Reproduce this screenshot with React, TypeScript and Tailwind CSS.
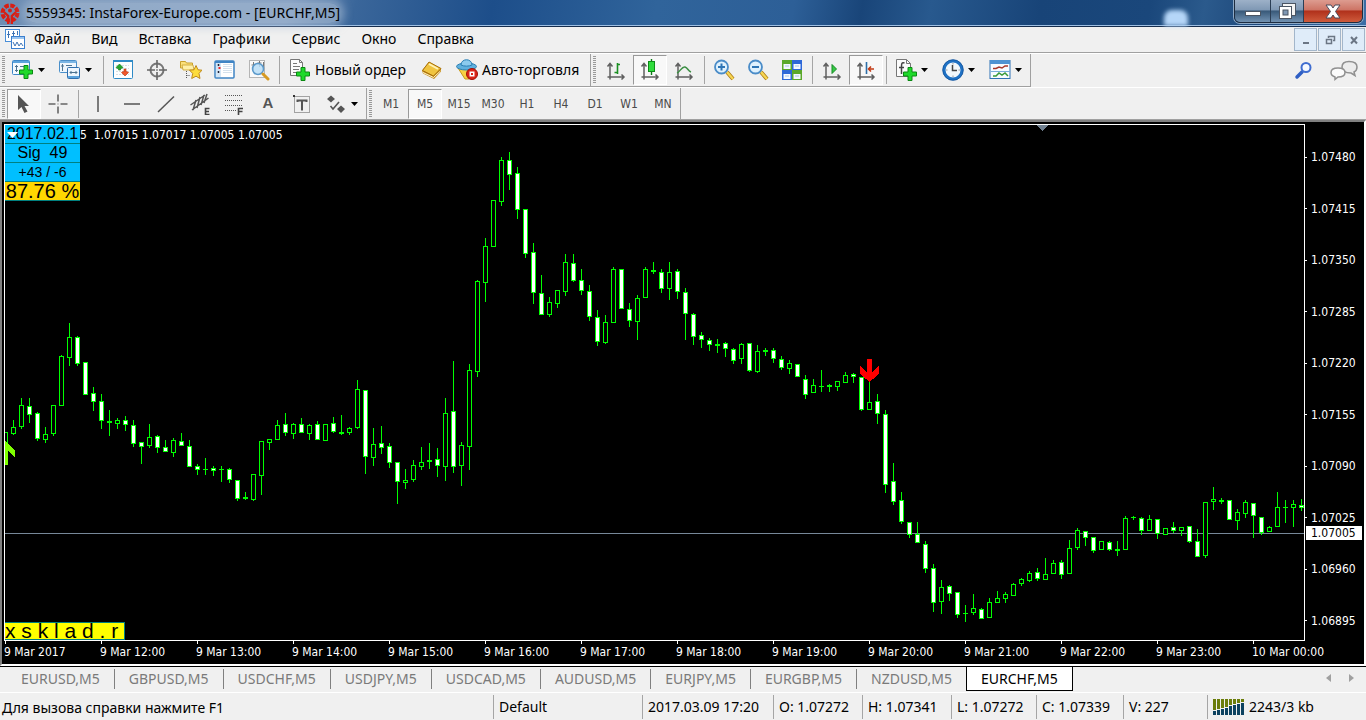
import type { ReactNode } from 'react'
import clsx from 'clsx'

type Candle = [high: number, top: number, bottom: number, low: number, kind: number]

// kind: 1 = up (hollow), 0 = down (white), 2 = doji (solid)
const candles: Candle[] = [
  [432, 432, 445, 445, 1], [420, 427, 434, 435, 1], [398, 405, 427, 429, 1], [398, 406, 415, 423, 0],
  [412, 413, 439, 441, 0], [427, 434, 440, 443, 1], [405, 405, 434, 436, 1], [355, 356, 406, 406, 1],
  [323, 337, 358, 366, 1], [336, 337, 364, 366, 0], [362, 362, 395, 395, 0], [387, 393, 402, 411, 0],
  [394, 401, 421, 429, 0], [410, 421, 423, 436, 2], [418, 420, 424, 429, 1], [416, 420, 425, 431, 0],
  [420, 425, 444, 447, 0], [442, 442, 447, 464, 0], [424, 437, 446, 448, 1], [435, 436, 448, 453, 0],
  [440, 447, 452, 452, 0], [438, 440, 453, 457, 1], [433, 441, 446, 446, 0], [440, 446, 467, 467, 0],
  [464, 466, 470, 475, 0], [458, 469, 470, 475, 2], [466, 468, 471, 476, 0], [466, 469, 470, 482, 2],
  [468, 469, 480, 483, 0], [480, 480, 499, 501, 0], [492, 497, 499, 500, 2], [474, 474, 500, 501, 1],
  [441, 441, 476, 495, 1], [439, 439, 443, 450, 1], [420, 425, 440, 440, 1], [413, 424, 433, 436, 0],
  [423, 424, 434, 439, 1], [418, 424, 433, 433, 0], [424, 425, 434, 440, 1], [421, 424, 440, 440, 0],
  [424, 424, 441, 441, 1], [417, 423, 432, 433, 0], [415, 432, 434, 435, 2], [427, 428, 433, 435, 1],
  [380, 389, 428, 429, 1], [390, 390, 457, 474, 0], [428, 444, 458, 466, 1], [426, 443, 448, 454, 0],
  [443, 446, 463, 468, 0], [462, 462, 482, 504, 0], [469, 480, 483, 489, 1], [460, 465, 480, 482, 1],
  [447, 462, 467, 470, 1], [443, 460, 462, 469, 2], [448, 459, 466, 477, 0], [398, 413, 467, 481, 1],
  [361, 411, 467, 473, 0], [442, 445, 466, 486, 1], [364, 370, 447, 470, 1], [280, 281, 372, 377, 1],
  [238, 246, 283, 302, 1], [200, 200, 247, 247, 1], [157, 160, 202, 206, 1], [152, 160, 175, 190, 0],
  [167, 173, 210, 219, 0], [209, 209, 254, 258, 0], [243, 252, 293, 304, 0], [275, 293, 315, 315, 0],
  [297, 302, 315, 317, 1], [290, 290, 304, 308, 1], [254, 262, 292, 296, 1], [254, 263, 281, 282, 0],
  [269, 280, 291, 295, 0], [285, 291, 317, 321, 0], [310, 317, 342, 346, 0], [315, 322, 343, 344, 1],
  [267, 269, 323, 323, 1], [269, 269, 309, 309, 0], [303, 309, 321, 327, 0], [295, 298, 322, 340, 1],
  [267, 269, 298, 298, 1], [262, 270, 272, 274, 2], [269, 272, 289, 293, 0], [262, 272, 289, 300, 1],
  [269, 271, 292, 299, 0], [288, 292, 314, 340, 0], [313, 314, 337, 345, 0], [332, 335, 340, 348, 0],
  [338, 340, 345, 351, 0], [339, 344, 346, 353, 2], [342, 343, 349, 357, 0], [348, 349, 361, 364, 0],
  [343, 344, 359, 364, 1], [343, 343, 371, 372, 0], [345, 351, 372, 373, 1], [348, 350, 352, 356, 2],
  [348, 350, 359, 363, 0], [356, 359, 368, 370, 0], [360, 363, 369, 374, 1], [364, 364, 377, 377, 0],
  [375, 379, 395, 399, 0], [379, 385, 393, 393, 1], [370, 386, 387, 392, 2], [384, 385, 387, 392, 2],
  [381, 381, 387, 391, 1], [372, 375, 383, 383, 1], [373, 374, 377, 383, 0], [377, 377, 410, 411, 0],
  [380, 402, 410, 410, 1], [394, 401, 414, 424, 0], [410, 414, 485, 493, 0], [463, 481, 502, 505, 0],
  [492, 500, 522, 524, 0], [522, 522, 535, 538, 0], [522, 534, 543, 543, 0], [541, 544, 569, 573, 0],
  [564, 568, 603, 612, 0], [580, 587, 602, 614, 1], [585, 586, 594, 601, 0], [592, 592, 615, 618, 0],
  [605, 613, 614, 622, 2], [594, 608, 613, 615, 1], [608, 609, 619, 619, 0], [598, 602, 618, 618, 1],
  [591, 598, 603, 603, 1], [592, 594, 599, 603, 1], [583, 584, 596, 596, 1], [578, 579, 584, 586, 1],
  [571, 573, 581, 582, 1], [568, 572, 579, 581, 0], [558, 574, 580, 580, 1], [560, 563, 574, 574, 1],
  [560, 562, 575, 579, 0], [540, 548, 574, 574, 1], [528, 530, 548, 550, 1], [531, 531, 538, 546, 0],
  [537, 537, 551, 553, 0], [541, 541, 550, 550, 1], [541, 542, 550, 551, 0], [541, 549, 551, 556, 2],
  [516, 518, 550, 550, 1], [516, 517, 518, 520, 2], [517, 518, 531, 535, 0], [515, 519, 531, 531, 1],
  [519, 519, 534, 539, 0], [528, 528, 535, 535, 1], [522, 527, 531, 533, 0], [527, 527, 531, 536, 1],
  [526, 526, 542, 543, 0], [529, 541, 557, 557, 0], [502, 502, 556, 558, 1], [487, 499, 502, 510, 1],
  [498, 500, 502, 504, 2], [500, 500, 520, 520, 0], [509, 512, 521, 530, 1], [500, 502, 514, 518, 1],
  [503, 503, 516, 538, 0], [517, 517, 533, 535, 0], [526, 527, 532, 532, 1], [492, 507, 527, 527, 1],
  [500, 507, 508, 523, 2], [500, 504, 508, 527, 1], [499, 505, 508, 511, 0],
]

const CHART_TOP = 125

const menuItems = ['Файл', 'Вид', 'Вставка', 'Графики', 'Сервис', 'Окно', 'Справка']
const timeframes = ['M1', 'M5', 'M15', 'M30', 'H1', 'H4', 'D1', 'W1', 'MN']
const prices = ['1.07480', '1.07415', '1.07350', '1.07285', '1.07220', '1.07155', '1.07090', '1.07025', '1.06960', '1.06895']
const times = [
  '9 Mar 2017', '9 Mar 12:00', '9 Mar 13:00', '9 Mar 14:00', '9 Mar 15:00', '9 Mar 16:00', '9 Mar 17:00',
  '9 Mar 18:00', '9 Mar 19:00', '9 Mar 20:00', '9 Mar 21:00', '9 Mar 22:00', '9 Mar 23:00', '10 Mar 00:00',
]
const tabs = [
  'EURUSD,M5', 'GBPUSD,M5', 'USDCHF,M5', 'USDJPY,M5', 'USDCAD,M5',
  'AUDUSD,M5', 'EURJPY,M5', 'EURGBP,M5', 'NZDUSD,M5', 'EURCHF,M5',
]
const statusCells = [
  { text: 'Default', width: 'w-[149px]' },
  { text: '2017.03.09 17:20', width: 'w-[131px]' },
  { text: 'O: 1.07272', width: 'w-[89px]' },
  { text: 'H: 1.07341', width: 'w-[89px]' },
  { text: 'L: 1.07272', width: 'w-[85px]' },
  { text: 'C: 1.07339', width: 'w-[87px]' },
  { text: 'V: 227', width: 'w-[84px]' },
]

/* ---------- icons ---------- */

function Icon({ children, size = 'w-[22px] h-[22px]', box = '0 0 22 22' }: { children: ReactNode; size?: string; box?: string }) {
  return (
    <svg className={clsx('shrink-0', size)} viewBox={box} fill="none" aria-hidden="true">
      {children}
    </svg>
  )
}

const Plus = ({ x, y }: { x: number; y: number }) => (
  <path
    transform={`translate(${x} ${y})`}
    d="M5 .5h4v4.500h4.500v4H9v4.500H5V9H.5V5H5z"
    fill="#1ed92a"
    stroke="#0a8a12"
  />
)

const NewChartIcon = () => (
  <Icon>
    <rect x=".5" y="1.500" width="17" height="14" rx="1" fill="#f4faff" stroke="#3d87c8" />
    <path d="M1 2h16v2H1z" fill="#5ba3dc" />
    <path d="M4.500 6v7M3 7.500h3M3 11.500h3M8 7.500h7M13 6v3" stroke="#4d7390" />
    <Plus x={7} y={6} />
  </Icon>
)

const ProfilesIcon = () => (
  <Icon>
    <rect x=".5" y="1.500" width="17" height="12" rx="1" fill="#eef6fd" stroke="#4a8fca" />
    <path d="M1 2h16v2H1z" fill="#7ab5e4" />
    <path d="M3.500 5v7M2 7h3M7 6.500h6" stroke="#4d7390" />
    <rect x="8.500" y="8.500" width="12" height="11" rx="1" fill="#eef6fd" stroke="#2f6fae" />
    <path d="M9 17h11v2H9z" fill="#5ba3dc" />
    <path d="M11 13.500h7M12.500 12L11 13.500l1.500 1.500M16.500 12l1.500 1.500-1.500 1.500" stroke="#4d7390" />
  </Icon>
)

const MarketWatchIcon = () => (
  <Icon>
    <rect x="1.500" y="1.500" width="19" height="18" rx="1" fill="#fdfefe" stroke="#2e8ac6" />
    <path d="M1 1h20v2H1z" fill="#2e8ac6" />
    <path d="M4 6.500h13M4 9.500h13M4 12.500h13M4 15.500h13" stroke="#d6dee4" strokeDasharray="2 1" />
    <path d="M4 8.500L7.500 5 11 8.500 9.500 9.500 8.500 9v2h-2V9l-1 .5z" fill="#27a82b" stroke="#0f7514" strokeWidth=".6" />
    <path d="M9.500 13.500l3.500 3.500 3.500-3.500-1.500-1-1 .5v-3h-2v3l-1-.5z" fill="#f0572c" stroke="#b8340f" strokeWidth=".6" />
  </Icon>
)

const DataWindowIcon = () => (
  <Icon>
    <circle cx="11" cy="11" r="6.500" stroke="#777" strokeWidth="2" />
    <path d="M11 1v8M11 13v8M1 11h8M13 11h8" stroke="#666" strokeWidth="1.600" />
    <circle cx="11" cy="11" r="1" fill="#888" />
  </Icon>
)

const NavigatorIcon = () => (
  <Icon>
    <path d="M.5 9V2.500h5l1 1.500h6V9z" fill="#fbe07a" stroke="#c9a02c" />
    <path d="M2 6h11l1 5H3z" fill="#fff0a8" stroke="#c9a02c" strokeWidth=".8" />
    <path d="M6.500 12v8M6.500 16.500h4" stroke="#555" strokeDasharray="1 1" />
    <path d="M16 6.500l2 4.300 4 .4-3 3.200 1 5.100-4-2.300-4.300 2.300 1-5.100-3.200-3.200 4.500-.4z" fill="#fddc3c" stroke="#c08a1c" />
  </Icon>
)

const TerminalIcon = () => (
  <Icon>
    <rect x="1" y="2" width="19" height="17" rx="1" fill="#fff" stroke="#3f84c4" strokeWidth="1.500" />
    <path d="M1 2h19v2H1z" fill="#3f84c4" />
    <path d="M2 4h5v14H2z" fill="#d3e5f5" />
    <path d="M4.500 5v2M4.500 12v2" stroke="#223" strokeWidth="1.500" />
    <path d="M5.500 8v2" stroke="#e22" strokeWidth="2" />
    <path d="M9 5.500h9M9 7.500h9M9 9.500h9M9 11.500h9M9 13.500h9" stroke="#d5e1ec" />
  </Icon>
)

const TesterIcon = () => (
  <Icon>
    <rect x="1.500" y="1.500" width="15" height="17" fill="#fafafa" stroke="#b5b5b5" />
    <path d="M5.500 3v10M3.500 6h4M11.500 2v6M9.500 4h4M15.500 3v6" stroke="#777" />
    <circle cx="10" cy="10" r="5.500" fill="#b8ddf6" fillOpacity=".85" stroke="#5c9acb" strokeWidth="1.500" />
    <path d="M15 15l5 5" stroke="#d79a22" strokeWidth="3" strokeLinecap="round" />
  </Icon>
)

const NewOrderIcon = () => (
  <Icon>
    <path d="M1.500.5h9l3 3v13h-12z" fill="#fbfbfb" stroke="#777" />
    <path d="M10.500.5v3h3" stroke="#777" />
    <path d="M4 4.500h4M4 7.500h7M4 10.500h6M4 13.500h4" stroke="#777" />
    <Plus x={7} y={8} />
  </Icon>
)

const BookIcon = () => (
  <Icon>
    <path d="M1 11.500L8 3l12 6.500v3L13 20 2 14.500z" fill="#c48a16" />
    <path d="M1.500 11.500L8 3l12 6.500-7.500 7.500z" fill="#f0c440" stroke="#a8700c" />
    <path d="M8 5l9 5" stroke="#fff2b5" strokeWidth="2" />
    <path d="M2 13.500L12.500 18.500l7-6.500" stroke="#fff6d0" />
  </Icon>
)

const AutoTradeIcon = () => (
  <Icon>
    <path d="M2 9h17l-6 11H9z" fill="#f7d043" stroke="#c79a1a" />
    <ellipse cx="10.500" cy="7.500" rx="10" ry="3.500" fill="#5fb0de" stroke="#2b7fb4" />
    <path d="M5 6c0-7 11-7 11 0-3 1.500-8 1.500-11 0z" fill="#8ccbee" stroke="#2b7fb4" />
    <circle cx="16" cy="15" r="5.500" fill="#db2418" stroke="#a01008" />
    <rect x="13.500" y="12.500" width="5" height="5" fill="#fff" />
    <rect x="15" y="14" width="2" height="2" fill="#db2418" />
  </Icon>
)

const Axes = () => (
  <path d="M5 20.500V4.500M2.500 7.500L5 4.500l2.500 3M2.500 18h16M16.500 15.500L19 18l-2.500 2.500" stroke="#5f5f5f" strokeWidth="1.500" />
)

const BarChartIcon = () => (
  <Icon>
    <Axes />
    <path d="M12.500 4v11M12.500 5.500H15M9.500 13.500h3" stroke="#1a8f22" strokeWidth="1.600" />
  </Icon>
)

const CandleChartIcon = () => (
  <Icon>
    <Axes />
    <path d="M12.500 0v16" stroke="#0d7d16" strokeWidth="1.400" />
    <rect x="9.500" y="2.500" width="6" height="10" fill="#2fdc3c" stroke="#0d8c18" />
  </Icon>
)

const LineChartIcon = () => (
  <Icon>
    <Axes />
    <path d="M4 14c3-1 5-7 8-6 3 1 3 4 6 5" stroke="#3c8f44" strokeWidth="1.500" />
  </Icon>
)

const ZoomIcon = ({ plus }: { plus?: boolean }) => (
  <Icon>
    <path d="M14 13l6 7" stroke="#a97812" strokeWidth="4" />
    <path d="M14 13l6 7" stroke="#f6d553" strokeWidth="2.500" />
    <circle cx="8.500" cy="8" r="6.500" fill="#dff1fd" stroke="#4a8cc8" strokeWidth="1.800" />
    <path d={plus ? 'M5 8h7M8.500 4.500v7' : 'M5 8h7'} stroke="#2d75b5" strokeWidth="2" />
  </Icon>
)

const TileIcon = () => (
  <Icon>
    <path d="M1 1h10v10H1zM11 11h10v10H11z" fill="#5aa82a" />
    <path d="M11 1h10v10H11zM1 11h10v10H1z" fill="#2d68d8" />
    <path d="M2.500 5h7v5h-7zM12.500 5h7v5h-7zM2.500 15h7v5h-7zM12.500 15h7v5h-7z" fill="#f3f8ff" />
    <path d="M4 7h4M14 7h4M4 17h4M14 17h4" stroke="#a9c4e6" />
  </Icon>
)

const AutoScrollIcon = () => (
  <Icon>
    <Axes />
    <path d="M11 5.500l4.500 4.500-4.500 4.500z" fill="#35c945" stroke="#158a22" />
  </Icon>
)

const ShiftIcon = () => (
  <Icon>
    <Axes />
    <path d="M11.500 3v12" stroke="#2d6ea8" strokeWidth="1.600" />
    <path d="M19 10h-5M16 7.500L13.500 10l2.500 2.500" stroke="#c23a14" strokeWidth="1.600" />
  </Icon>
)

const IndicatorIcon = () => (
  <Icon>
    <path d="M1.500.5h10l4 4v13h-14z" fill="#fbfbfb" stroke="#777" />
    <path d="M11.500.5v4h4" stroke="#777" />
    <path d="M9.500 4c-3-1-3 1-3 4v7M4 8.500h5" stroke="#444" strokeWidth="1.500" />
    <Plus x={8} y={8} />
  </Icon>
)

const ClockIcon = () => (
  <Icon>
    <circle cx="11" cy="11" r="9" fill="#f2f7fb" stroke="#1f71c4" strokeWidth="3" />
    <circle cx="11" cy="11" r="10.300" stroke="#0d4c94" strokeWidth=".7" />
    <path d="M10.500 6v5.500H15" stroke="#444" strokeWidth="1.500" />
    <path d="M11 4v1.500M11 16.500V18M4 11h1.500M16.500 11H18" stroke="#999" />
  </Icon>
)

const TemplateIcon = () => (
  <Icon>
    <rect x="1" y="1.500" width="20" height="18" fill="#f8fcff" stroke="#2f73b5" />
    <path d="M1 1h20v4H1z" fill="#4e93d2" />
    <path d="M2 12.500h19" stroke="#7aaedb" />
    <path d="M4 9.500h3l3-1.500 3 1 3-2h3" stroke="#a8372a" strokeWidth="1.500" />
    <path d="M4 17h3l3-3 3 2 3-2 3 3" stroke="#3a9a3a" strokeWidth="1.500" />
  </Icon>
)

const SearchIcon = () => (
  <Icon>
    <path d="M10 12l-5 5" stroke="#2f5fc4" strokeWidth="3.500" strokeLinecap="round" />
    <circle cx="14" cy="7.500" r="4.500" fill="#f5f9ff" stroke="#3f6dd0" strokeWidth="2" />
  </Icon>
)

const ChatIcon = () => (
  <Icon size="w-[28px] h-[22px]" box="0 0 28 22">
    <path d="M19 1.500c5 0 8 1.500 8 5.500 0 3-1 4-3 5l1 3.500-4-2.500c-6 0-9-2-9-6s3-5.500 7-5.500z" fill="#ececec" stroke="#909090" strokeWidth="1.500" />
    <path d="M8 8c4 0 7 1.500 7 4.500S12 17 8 17l-3 2.500V17c-3-1-4-2-4-4.500C1 9.500 4 8 8 8z" fill="#fbfbfb" stroke="#909090" strokeWidth="1.500" />
  </Icon>
)

const CursorIcon = () => (
  <Icon>
    <path d="M5 2v15l3.500-3 3 6 3-1.500-3-5.500H16z" fill="#555" />
  </Icon>
)

const CrossIcon = () => (
  <Icon>
    <path d="M11 1.500v7M11 13.500v7M1.500 11h7M13.500 11h7" stroke="#666" strokeWidth="1.600" />
    <path d="M10.500 10.500h1v1h-1z" fill="#666" />
  </Icon>
)

const VLineIcon = () => <Icon><path d="M11 3v16" stroke="#555" strokeWidth="1.500" /></Icon>
const HLineIcon = () => <Icon><path d="M3 11h16" stroke="#555" strokeWidth="1.500" /></Icon>
const TrendIcon = () => <Icon><path d="M3 19L19 3.500" stroke="#555" strokeWidth="1.500" /></Icon>

const ChannelIcon = () => (
  <Icon>
    <path d="M1.500 12L16 2M3 17L19.500 5M4 17L7 7M8 15l3-11M12 12l3-10M15 10l3-9" stroke="#555" strokeWidth="1.500" />
    <path d="M20.500 15.500h-4v6h4M16.500 18.500h3.500" stroke="#444" strokeWidth="1.600" />
  </Icon>
)

const FiboIcon = () => (
  <Icon>
    <path d="M2 2.500h18M2 7.500h18M2 12.500h18M2 17.500h11" stroke="#555" strokeDasharray="1 1" />
    <path d="M20 15.500h-4.500V22M15.500 18.500h4" stroke="#444" strokeWidth="1.600" />
  </Icon>
)

const LabelIcon = () => (
  <Icon>
    <rect x="3.500" y="3.500" width="15" height="16" stroke="#555" strokeDasharray="1 1" />
    <path d="M2 2h2v2H2z" fill="#333" />
    <path d="M6.500 9V7.500h9V9M11 8v9.500" stroke="#555" strokeWidth="2" />
  </Icon>
)

const ArrowsIcon = () => (
  <Icon>
    <path d="M6 2.500L10 6l-2.500 2L6 9.500 2 6zM16 12.500l4 3.500-4 4-4-4z" fill="#555" />
    <path d="M5.500 13l2.500 3 6-7" stroke="#555" strokeWidth="1.600" />
  </Icon>
)

const DropArrow = () => (
  <svg className="h-1 w-[7px] shrink-0" viewBox="0 0 7 4" aria-hidden="true">
    <path d="M0 0h7L3.500 4z" fill="#000" />
  </svg>
)

const LogoIcon = () => (
  <svg className="size-[22px] shrink-0" viewBox="0 0 22 22" fill="none" aria-hidden="true">
    <circle cx="10" cy="11" r="7.500" stroke="#d81e14" strokeWidth="4" strokeDasharray="4.400 1.500" />
    <path d="M8.200 22v-8L4 10M11.800 22v-8L16 10" stroke="#d81e14" strokeWidth="2.400" />
    <circle cx="10" cy="8.500" r="2" fill="#d81e14" />
  </svg>
)

const ChartDocIcon = () => (
  <svg className="size-5 shrink-0" viewBox="0 0 20 20" fill="none" aria-hidden="true">
    <rect x=".5" y=".5" width="14" height="12" fill="#fff" stroke="#4a8fd8" />
    <path d="M3.500 2v7M2 5.500h3M8.500 2v5M7 4.500h3M12.500 2v4" stroke="#3f74b5" />
    <rect x="6.500" y="7.500" width="13" height="12" fill="#fff" stroke="#3b7fcf" />
    <path d="M7 8h12v2H7z" fill="#9cc6f0" />
    <path d="M8 13l2 4 2-4 2 4 2-3 2 3" stroke="#3f74b5" />
  </svg>
)

/* ---------- toolbar parts ---------- */

function ToolButton({ label, pressed, children }: { label: string; pressed?: boolean; children: ReactNode }) {
  return (
    <button
      type="button"
      aria-label={label}
      aria-pressed={pressed}
      className={clsx(
        'flex w-[34px] h-[30px] items-center justify-center shrink-0 border',
        pressed ? 'bg-[#f8f8f8] border-t-[#999] border-l-[#999] border-r-white border-b-white' : 'border-transparent',
      )}
    >
      {children}
    </button>
  )
}

function DropButton({ label, children }: { label: string; children: ReactNode }) {
  return (
    <button type="button" aria-label={label} className="flex w-[47px] h-[30px] items-center gap-1 pl-1.5 shrink-0">
      {children}
      <DropArrow />
    </button>
  )
}

const Separator = () => <div className="w-px h-7 ml-[3px] mr-0.5 bg-[#a5a5a5] shrink-0" />

const Grip = () => (
  <div className="w-[3px] h-7 ml-0.5 mr-px shrink-0 bg-[repeating-linear-gradient(to_bottom,#999_0_1px,#f0f0f0_1px_2px)]" />
)

function Band({ children }: { children: ReactNode }) {
  return (
    <div className="flex items-center border-r border-[#a0a0a0] shrink-0">
      {children}
    </div>
  )
}

/* ---------- window parts ---------- */

function TitleBar() {
  return (
    <header className="flex h-[27px] justify-between border-b border-[#152c4c] bg-[linear-gradient(100deg,#6d8db3_0%,#7795bb_21%,#3a669a_26%,#1d4e8a_36%,#30649b_48%,#2d5f97_58%,#194579_63%,#28598e_68%,#184478_76%,#1a477b_84%,#2b5a8c_88%,#1d487b_92%,#3c6ea6_100%)] shadow-[inset_0_-1px_0_#9fc0e4]">
      <div className="flex items-center gap-1">
        <LogoIcon />
        <div className="rounded-full bg-[#a8bcd4]/60 shadow-[0_0_8px_4px_rgb(168_188_212/0.6)]">
          <h1 className="text-[14px] leading-5 text-black">5559345: InstaForex-Europe.com - [EURCHF,M5]</h1>
        </div>
      </div>
      <div className="flex">
        <div className="w-6 h-4 mt-2.5 mr-[46px] rounded-t-lg bg-[#b5d6f8] blur-[2px]" />
        <div className="flex h-[23px] mr-[3px] rounded-b-md border border-t-0 border-[#1d2c40] overflow-hidden shadow-[0_0_0_1px_#8da9c6]">
          <button type="button" aria-label="Свернуть" className="flex w-[35px] items-end justify-center pb-1.5 bg-[linear-gradient(#9db1c8_0%,#7f98b4_45%,#385979_50%,#7292b2_100%)]">
            <span className="w-4 h-[5px] border border-[#4b5563] bg-white" />
          </button>
          <button type="button" aria-label="Развернуть" className="flex w-[33px] items-center justify-center border-l border-[#2b3e55] bg-[linear-gradient(#9db1c8_0%,#7f98b4_45%,#385979_50%,#7292b2_100%)]">
            <svg className="size-[18px]" viewBox="0 0 18 18" fill="none" aria-hidden="true">
              <rect x="4.500" y="1.500" width="13" height="12" fill="#f4f4f4" stroke="#4b5563" />
              <rect x="1.500" y="4.500" width="12" height="12" fill="#fff" stroke="#4b5563" />
              <rect x="5" y="8" width="5" height="5" fill="#7f98b4" stroke="#4b5563" />
            </svg>
          </button>
          <button type="button" aria-label="Закрыть" className="flex w-[59px] items-center justify-center border-l border-[#2b3e55] bg-[linear-gradient(#dd9c90_0%,#cd7465_45%,#b0301b_50%,#cf5b3c_100%)]">
            <svg className="w-4 h-[15px]" viewBox="0 0 16 15" aria-hidden="true">
              <path d="M1 1h5l2 3 2-3h5l-4.500 6.500L15 14h-5l-2-3-2 3H1l4.500-6.500z" fill="#fff" stroke="#4b4b5b" />
            </svg>
          </button>
        </div>
      </div>
    </header>
  )
}

function MdiButton({ label, children }: { label: string; children: ReactNode }) {
  return (
    <button type="button" aria-label={label} className="flex w-[23px] h-[23px] items-center justify-center border border-[#a3b6ca] bg-[#dfecf9]">
      <svg className="size-3" viewBox="0 0 12 12" fill="none" stroke="#6b7684" strokeWidth="2" aria-hidden="true">
        {children}
      </svg>
    </button>
  )
}

function MenuBar() {
  return (
    <nav className="flex h-[26px] items-center justify-between border-b border-[#a0a0a0] pl-[5px] pr-px">
      <div className="flex items-center pb-0.5">
        <ChartDocIcon />
        <ul className="flex gap-[21px] pl-[9px]">
          {menuItems.map((item) => (
            <li key={item} className="flex">
              <button type="button" className="text-[14px] leading-5">{item}</button>
            </li>
          ))}
        </ul>
      </div>
      <div className="flex gap-px">
        <MdiButton label="Свернуть окно"><path d="M3 9h6" /></MdiButton>
        <MdiButton label="Восстановить окно">
          <path d="M4.500 4V2.500h6v4H9M2.500 5.500h5v4h-5z" strokeWidth="1.500" />
        </MdiButton>
        <MdiButton label="Закрыть окно"><path d="M3 3l6 6.500M9 3L3 9.500" /></MdiButton>
      </div>
    </nav>
  )
}

function MainToolbar() {
  return (
    <div className="flex h-[34px] justify-between border-t border-white">
      <div className="flex border-b border-[#a0a0a0]">
        <Band>
          <Grip />
          <DropButton label="Новый график"><NewChartIcon /></DropButton>
          <DropButton label="Профили"><ProfilesIcon /></DropButton>
          <Separator />
          <ToolButton label="Обзор рынка"><MarketWatchIcon /></ToolButton>
          <ToolButton label="Окно данных"><DataWindowIcon /></ToolButton>
          <ToolButton label="Навигатор"><NavigatorIcon /></ToolButton>
          <ToolButton label="Терминал"><TerminalIcon /></ToolButton>
          <ToolButton label="Тестер стратегий"><TesterIcon /></ToolButton>
          <Separator />
          <button type="button" className="flex h-[30px] w-[133px] shrink-0 items-center gap-1 pl-[7px] text-[14px] whitespace-nowrap">
            <NewOrderIcon />
            <span className="pb-0.5">Новый ордер</span>
          </button>
          <ToolButton label="MetaEditor"><BookIcon /></ToolButton>
          <button type="button" className="flex h-[30px] w-[141px] shrink-0 items-center gap-1 pl-[7px] text-[14px] whitespace-nowrap">
            <AutoTradeIcon />
            <span className="pb-0.5">Авто-торговля</span>
          </button>
        </Band>
        <Band>
          <Grip />
          <div className="w-0.5" />
          <ToolButton label="Бары"><BarChartIcon /></ToolButton>
          <ToolButton label="Японские свечи" pressed><CandleChartIcon /></ToolButton>
          <ToolButton label="Линия"><LineChartIcon /></ToolButton>
          <Separator />
          <ToolButton label="Увеличить"><ZoomIcon plus /></ToolButton>
          <ToolButton label="Уменьшить"><ZoomIcon /></ToolButton>
          <ToolButton label="Расположить окна"><TileIcon /></ToolButton>
          <Separator />
          <ToolButton label="Автопрокрутка"><AutoScrollIcon /></ToolButton>
          <ToolButton label="Сдвиг графика" pressed><ShiftIcon /></ToolButton>
          <Separator />
          <DropButton label="Индикаторы"><IndicatorIcon /></DropButton>
          <DropButton label="Периоды"><ClockIcon /></DropButton>
          <DropButton label="Шаблоны"><TemplateIcon /></DropButton>
        </Band>
      </div>
      <div className="flex items-center gap-4 pr-2">
        <button type="button" aria-label="Поиск"><SearchIcon /></button>
        <button type="button" aria-label="Чат"><ChatIcon /></button>
      </div>
    </div>
  )
}

function DrawToolbar() {
  return (
    <div className="flex h-[33px] border-t border-white border-b border-b-[#a0a0a0]">
      <Band>
        <Grip />
        <div className="w-px" />
        <ToolButton label="Курсор" pressed><CursorIcon /></ToolButton>
        <ToolButton label="Перекрестие"><CrossIcon /></ToolButton>
        <Separator />
        <ToolButton label="Вертикальная линия"><VLineIcon /></ToolButton>
        <ToolButton label="Горизонтальная линия"><HLineIcon /></ToolButton>
        <ToolButton label="Трендовая линия"><TrendIcon /></ToolButton>
        <ToolButton label="Канал"><ChannelIcon /></ToolButton>
        <ToolButton label="Фибоначчи"><FiboIcon /></ToolButton>
        <ToolButton label="Текст">
          <span className="font-['Liberation_Sans'] text-[15px] font-bold text-[#555]">A</span>
        </ToolButton>
        <ToolButton label="Метка"><LabelIcon /></ToolButton>
        <DropButton label="Стрелки"><ArrowsIcon /></DropButton>
      </Band>
      <Band>
        <Grip />
        <div className="w-px" />
        {timeframes.map((tf) => (
          <ToolButton key={tf} label={tf} pressed={tf === 'M5'}>
            <span className="font-['DejaVu_Sans_Condensed','DejaVu_Sans',sans-serif] text-[12px] text-[#4a4a4a]">{tf}</span>
          </ToolButton>
        ))}
      </Band>
    </div>
  )
}

function PriceChart() {
  return (
    <svg className="block w-full h-[515px]" shapeRendering="crispEdges" role="img" aria-label="EURCHF,M5">
      <g transform={`translate(0 ${-CHART_TOP})`}>
        <rect x="0" y="533" width="100%" height="1" fill="#778899" />
        {candles.map(([high, top, bottom, low, kind], i) => {
          const x = i * 8
          return (
            <g key={i} fill="#00ff00">
              <rect x={x} y={high} width="1" height={low - high} />
              <rect x={x - 2} y={top} width="5" height={bottom - top} />
              {kind !== 2 && (
                <rect x={x - 1} y={top + 1} width="3" height={Math.max(bottom - top - 2, 0)} fill={kind ? '#000' : '#fff'} />
              )}
            </g>
          )
        })}
        <path d="M0 441l10 9v7l-7-6v14H0z" fill="#7fff00" />
        <path d="M862 359h5v13l7-6v8l-9.500 8-9.500-8v-8l7 6z" fill="#ff0000" />
        <path d="M1032 125h11l-5.500 6z" fill="#708090" />
      </g>
    </svg>
  )
}

function ChartWindow() {
  return (
    <main className="border-2 border-[#808080] border-b-white border-r-white bg-black pt-0.5 pl-0.5 font-['DejaVu_Sans_Condensed','Noto_Sans',sans-serif] text-[12px] text-white">
      <div className="flex">
        <div className="relative flex-1 min-w-0 border border-white">
          <PriceChart />
          <p className="absolute left-[75px] top-0.5 leading-4 whitespace-pre">5  1.07015 1.07017 1.07005 1.07005</p>
          <div className="absolute left-0 top-0 w-[75px] whitespace-pre text-center font-['Liberation_Sans',Arial,sans-serif] text-black">
            <div className="h-[19px] border-b border-[#008080] bg-[#00bfff] text-[16px] leading-[18px]">2017.02.1</div>
            <div className="h-[19px] border-b border-[#008080] bg-[#00bfff] text-[16px] leading-[18px]">Sig  49</div>
            <div className="h-[19px] border-b border-[#008080] bg-[#00bfff] text-[14px] leading-[18px]">+43 / -6</div>
            <div className="h-[19px] border-b border-[#008080] bg-[#ffd700] text-[20px] leading-[18px]">87.76 %</div>
          </div>
          <svg className="absolute left-0.5 top-[7px] h-1.5 w-[11px]" viewBox="0 0 11 6" aria-hidden="true">
            <path d="M0 0h11L5.500 6z" fill="#fff" />
          </svg>
          <div className="absolute left-0 bottom-0 w-[120px] h-[18px] whitespace-nowrap border-y border-r border-[#008080] bg-[#ffff00] font-['Liberation_Sans',Arial,sans-serif] text-[21px] leading-4 text-black">
            x s k l a d . r
          </div>
        </div>
        <div className="relative flex w-[59px] shrink-0 flex-col justify-between pt-[25px] pb-3">
          {prices.map((price) => (
            <div key={price} className="flex h-4 items-center gap-1">
              <span className="h-px w-0.5 bg-white" />
              {price}
            </div>
          ))}
          <div className="absolute left-px top-[402px] h-3.5 w-14 bg-white pl-[5px] leading-[14px] text-black">1.07005</div>
        </div>
      </div>
      <div className="flex h-[23px] overflow-hidden">
        {times.map((time) => (
          <div key={time} className="w-24 shrink-0 whitespace-nowrap">
            <div className="ml-px h-[3px] w-px bg-white" />
            <div className="leading-4">{time}</div>
          </div>
        ))}
      </div>
    </main>
  )
}

function ChartTabs() {
  return (
    <div className="flex h-[26px] justify-between border-t border-black bg-[#f0f0f0]">
      <div className="flex pl-[7px]" role="tablist">
        {tabs.map((tab, i) => {
          const active = i === tabs.length - 1
          return (
            <button
              key={tab}
              type="button"
              role="tab"
              aria-selected={active}
              className={clsx('flex h-6 items-center text-[14px]', active ? 'border border-t-0 border-black bg-white' : 'text-[#7a7a7a]')}
            >
              <span className={clsx('px-3.5 leading-5', i < tabs.length - 2 && 'border-r border-[#808080]')}>{tab}</span>
            </button>
          )
        })}
      </div>
      <div className="flex items-center gap-[18px] pr-3 pb-1">
        <button type="button" aria-label="Назад">
          <svg className="h-2 w-[5px]" viewBox="0 0 5 8" aria-hidden="true"><path d="M5 0v8L0 4z" fill="#a0a0a0" /></svg>
        </button>
        <button type="button" aria-label="Вперёд">
          <svg className="h-2 w-[5px]" viewBox="0 0 5 8" aria-hidden="true"><path d="M0 0v8l5-4z" fill="#a0a0a0" /></svg>
        </button>
      </div>
    </div>
  )
}

function StatusBar() {
  const bars = [4, 5, 6, 7, 9, 10, 11, 12]
  return (
    <footer className="flex h-[29px] items-center border-t border-white text-[14px] whitespace-nowrap">
      <div className="flex-1 pl-0.5">Для вызова справки нажмите F1</div>
      {statusCells.map((cell) => (
        <div key={cell.text} className={clsx('h-6 shrink-0 border-l border-[#a5a5a5] pl-[5px] leading-6', cell.width)}>
          {cell.text}
        </div>
      ))}
      <div className="flex h-6 w-[159px] shrink-0 items-center gap-1 border-l border-[#a5a5a5] pl-[5px] leading-6">
        <svg className="h-4 w-8" viewBox="0 0 32 16" shapeRendering="crispEdges" aria-hidden="true">
          {bars.map((h, i) => (
            <g key={i}>
              <rect x={i * 4} y="0" width="3" height={15 - h} fill="#6b7d0a" />
              <rect x={i * 4} y={16 - h} width="3" height={h} fill="#0d4260" />
            </g>
          ))}
        </svg>
        2243/3 kb
      </div>
    </footer>
  )
}

export default function App() {
  return (
    <div className="min-h-screen bg-[#f0f0f0] font-['Noto_Sans','Open_Sans',sans-serif] text-black">
      <TitleBar />
      <MenuBar />
      <MainToolbar />
      <DrawToolbar />
      <ChartWindow />
      <ChartTabs />
      <StatusBar />
    </div>
  )
}
